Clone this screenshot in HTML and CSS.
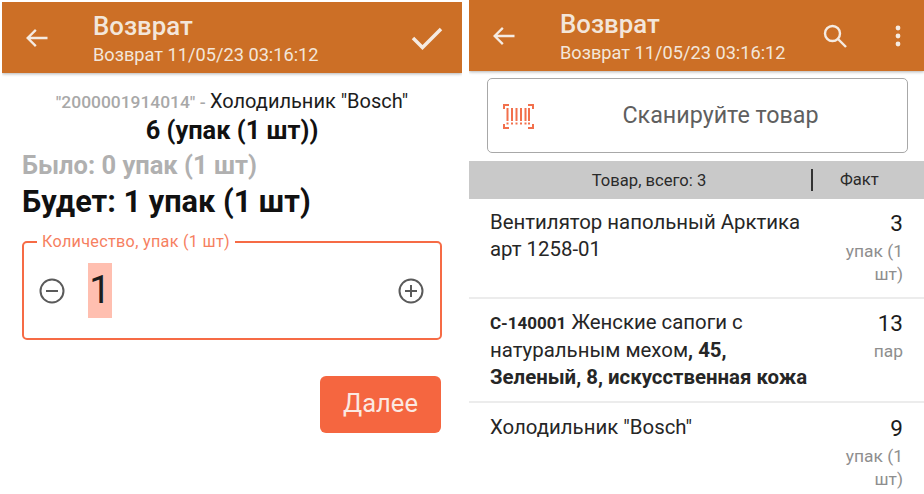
FILE: index.html
```html
<!DOCTYPE html>
<html lang="en">
<head>
  <meta charset="UTF-8">
  <title>Возврат</title>
  <link rel="stylesheet" href="styles.css">
</head>
<body>
  <div class="screens">
    <div class="screen screen-left">
      <div class="appbar">
        <svg class="icon back" viewBox="0 0 24 24"><path d="M21 12H4.500M11 5l-7 7 7 7"/></svg>
        <div class="titles">
          <div class="title">Возврат</div>
          <div class="subtitle">Возврат 11/05/23 03:16:12</div>
        </div>
        <svg class="icon check" viewBox="0 0 32 24"><path d="M2 12l9.500 9.500L30 3"/></svg>
      </div>
      <div class="product">
        <div class="product-name"><span class="barcode">"2000001914014" - </span>Холодильник "Bosch"</div>
        <div class="product-count">6 (упак (1 шт))</div>
      </div>
      <div class="was">Было: 0 упак (1 шт)</div>
      <div class="will">Будет: 1 упак (1 шт)</div>
      <fieldset class="qty">
        <legend>Количество, упак (1 шт)</legend>
        <svg class="round-icon" viewBox="0 0 26 26"><circle cx="13" cy="13" r="11.500"/><path d="M7 13h12"/></svg>
        <span class="qty-value">1</span>
        <svg class="round-icon plus" viewBox="0 0 26 26"><circle cx="13" cy="13" r="11.500"/><path d="M7 13h12M13 7v12"/></svg>
      </fieldset>
      <div class="actions">
        <button class="next">Далее</button>
      </div>
    </div>

    <div class="screen screen-right">
      <div class="appbar">
        <svg class="icon back" viewBox="0 0 24 24"><path d="M21 12H4.500M11 5l-7 7 7 7"/></svg>
        <div class="titles">
          <div class="title">Возврат</div>
          <div class="subtitle">Возврат 11/05/23 03:16:12</div>
        </div>
        <svg class="icon search" viewBox="0 0 24 24"><circle cx="9.500" cy="9.500" r="7.500"/><path d="M15 15l8 8"/></svg>
        <svg class="dots" viewBox="0 0 6 22"><circle cx="3" cy="3" r="2.400"/><circle cx="3" cy="11" r="2.400"/><circle cx="3" cy="19" r="2.400"/></svg>
      </div>
      <div class="scan">
        <svg class="scan-icon" viewBox="0 0 32 26">
          <path class="corners" d="M2 6V2h5M26 2h5v4M31 21v4h-5M7 25H2v-4"/>
          <path class="bars" d="M5.500 5v13M10 5v13M14.500 5v13M19 5v13M23.500 5v13M27 5v13M5.500 19.500v2M10 19.500v2M14.500 19.500v2M19 19.500v2M23.500 19.500v2M27 19.500v2"/>
        </svg>
        <span class="scan-text">Сканируйте товар</span>
      </div>
      <div class="table-head">
        <div class="head-name">Товар, всего: 3</div>
        <div class="head-fact">Факт</div>
      </div>
      <div class="row row-first">
        <div class="row-name">Вентилятор напольный Арктика арт 1258-01</div>
        <div class="row-qty">
          <div class="num">3</div>
          <div class="unit">упак (1 шт)</div>
        </div>
      </div>
      <div class="row row-second">
        <div class="row-name"><b class="code">С-140001</b> Женские сапоги с натуральным мехом<b>, 45, Зеленый, 8, искусственная кожа</b></div>
        <div class="row-qty">
          <div class="num">13</div>
          <div class="unit">пар</div>
        </div>
      </div>
      <div class="row row-last">
        <div class="row-name">Холодильник "Bosch"</div>
        <div class="row-qty">
          <div class="num">9</div>
          <div class="unit">упак (1 шт)</div>
        </div>
      </div>
    </div>
  </div>
</body>
</html>
```

FILE: styles.css
```css
html, body {
  height: 100%;
}

body {
  margin: 0;
  background: white;
  font-family: Roboto, "Noto Sans", sans-serif;
  color: #1c1c1c;
  overflow: hidden;
}

.screens {
  display: flex;
  height: 494px;
}

.screen {
  overflow: hidden;
}

.screen-left {
  width: 460px;
  margin: 2px 0 0 2px;
}

.screen-right {
  width: 455px;
  margin-left: 7px;
}

.appbar {
  display: flex;
  align-items: center;
  background-color: #cc6f26;
  color: #f3e6da;
  height: 71px;
  box-shadow: 0 1px 3px rgba(0, 0, 0, 0.3);
}

.icon {
  fill: none;
  stroke: #f5ebe2;
  stroke-width: 2;
  flex: none;
}

.back {
  width: 28px;
  height: 28px;
  margin-left: 21px;
}

.titles {
  margin-left: 42px;
  padding-top: 2px;
  flex: 1;
}

.title {
  font-size: 25.800px;
  font-weight: 500;
  line-height: 30px;
}

.subtitle {
  font-size: 18.200px;
  line-height: 22px;
  margin-top: 3px;
}

.check {
  width: 32px;
  height: 24px;
  margin-right: 19px;
  stroke-width: 3.500;
}

.search {
  width: 24px;
  height: 24px;
  margin-right: 48px;
  stroke-width: 2.400;
}

.dots {
  width: 6px;
  height: 22px;
  margin-right: 23px;
  fill: #f5ebe2;
}

.product {
  text-align: center;
  margin-top: 15px;
}

.product-name {
  font-size: 20px;
  line-height: 26px;
}

.barcode {
  color: #a8a8a8;
  font-size: 17.400px;
  font-weight: 500;
}

.product-count {
  font-size: 25.400px;
  font-weight: 700;
  line-height: 30px;
  color: #111;
}

.was, .will {
  font-weight: 700;
  margin-left: 20px;
}

.was {
  color: #b0b0b0;
  font-size: 25.500px;
  line-height: 36px;
  margin-top: 2px;
}

.will {
  color: #111;
  font-size: 30.700px;
  line-height: 38px;
}

.qty {
  display: flex;
  align-items: center;
  box-sizing: border-box;
  width: 420px;
  height: 107px;
  margin: 12px 0 0 20px;
  padding: 0 16px 8px 15px;
  border: 2px solid #f66b45;
  border-radius: 5px;
}

.qty legend {
  margin-left: -2px;
  padding: 0 5px;
  font-size: 16.200px;
  line-height: 18px;
  letter-spacing: 0.300px;
  color: #f6805f;
}

.round-icon {
  width: 26px;
  height: 26px;
  fill: none;
  stroke: #5a5a5a;
  stroke-width: 2;
  flex: none;
}

.plus {
  margin-left: auto;
}

.qty-value {
  margin-left: 23px;
  width: 24px;
  height: 55px;
  line-height: 55px;
  text-align: center;
  font-size: 38px;
  background-color: #ffbfb0;
}

.actions {
  display: flex;
  justify-content: flex-end;
  margin: 36px 21px 0 0;
}

.next {
  width: 121px;
  height: 57px;
  padding: 0 0 3px;
  border: none;
  border-radius: 6px;
  background-color: #f56640;
  color: #fbe9e2;
  font-family: inherit;
  font-size: 25.500px;
}

.scan {
  display: flex;
  align-items: center;
  box-sizing: border-box;
  width: 421px;
  height: 75px;
  margin: 7px 0 8px 18px;
  border: 1px solid #a8a8a8;
  border-radius: 5px;
}

.scan-icon {
  width: 32px;
  height: 26px;
  margin-left: 14px;
  flex: none;
  fill: none;
}

.corners {
  stroke: #f2704c;
  stroke-width: 2;
}

.bars {
  stroke: #f2704c;
  stroke-width: 2;
}

.scan-text {
  flex: 1;
  text-align: center;
  font-size: 23.300px;
  color: #5f5f5f;
  padding-bottom: 2px;
}

.table-head {
  display: flex;
  align-items: center;
  height: 38px;
  background-color: #c9c9c9;
  font-size: 16.600px;
  color: #2a2a2a;
}

.head-name {
  width: 342px;
  padding-left: 18px;
  box-sizing: border-box;
  text-align: center;
  flex: none;
}

.head-fact {
  flex: none;
  width: 69px;
  height: 22px;
  line-height: 22px;
  border-left: 2px solid #333;
  padding-left: 27px;
}

.row {
  display: flex;
  justify-content: space-between;
  box-sizing: border-box;
  border-bottom: 2px solid #ececec;
  padding: 10px 21px 0 21px;
  overflow: hidden;
}

.row-first {
  height: 100px;
}

.row-second {
  height: 104px;
}

.row-last {
  height: 100px;
  padding-top: 11px;
  border-bottom: none;
}

.row-name {
  width: 325px;
  font-size: 20.400px;
  line-height: 27px;
  color: #262626;
}

.code {
  font-size: 17px;
}

.row-qty {
  width: 66px;
  text-align: right;
}

.num {
  font-size: 22.500px;
  line-height: 28px;
}

.unit {
  font-size: 17.400px;
  line-height: 23px;
  color: #8e8e8e;
  margin-top: 3px;
}
```
